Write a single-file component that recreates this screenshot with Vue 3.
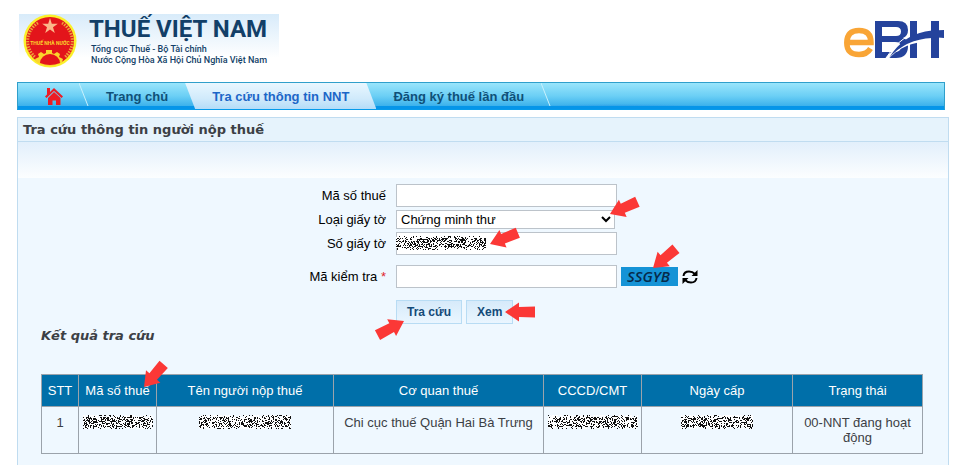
<template>
  <div class="page">
    <header class="header">
      <a class="brand" href="#">
        <svg class="emblem" viewBox="0 0 54 54" aria-hidden="true">
          <circle cx="27" cy="27" r="26.500" fill="#fbf02b" />
          <circle cx="27" cy="27" r="24" fill="#e3151b" />
          <path d="M15 9A21 21 0 0 0 12 43M39 9A21 21 0 0 1 42 43" fill="none" stroke="#f0a23a" stroke-width="3" stroke-dasharray="1.500 1.200" />
          <path d="M27 4l1.800 5.700h6l-4.800 3.600 1.800 5.700-4.800-3.500-4.800 3.500 1.800-5.700-4.800-3.600h6z" fill="#fbb78a" />
          <path d="M13 48l-1-3 4-2-1-3 3-2 3 2 2-1v-3h6v3l2 1 3-2 3 2-1 3 4 2-1 3q-12 8-26 0z" fill="#fbd52c" />
          <path d="M17 49a10 9 0 0 1 20 0q-10 4-20 0z" fill="#e3151b" />
          <path d="M8 25h38v8H8z" fill="#e3151b" />
          <text x="27" y="31" text-anchor="middle" class="emblem-text">THUẾ NHÀ NƯỚC</text>
        </svg>
        <span class="brand-text">
          <strong class="brand-name">THUẾ VIỆT NAM</strong>
          <span class="brand-line">Tổng cục Thuế - Bộ Tài chính</span>
          <span class="brand-line">Nước Cộng Hòa Xã Hội Chủ Nghĩa Việt Nam</span>
        </span>
      </a>
      <svg class="ebh" viewBox="0 0 100 40" role="img" aria-label="eBH">
        <path d="M3 22.500H27Q27 10.500 15 10.500T2.800 22.500 15 34.500Q23 34.500 26.500 28.500" fill="none" stroke="#f9a536" stroke-width="5.500" />
        <path d="M31 1h23q10 0 10 9 0 6-5 8 5 1 5 8 0 12-12 12H31zm7 6v9h14q5 0 5-4.500T52 7zm0 15v10h12q7 0 7-5t-6-5z" fill="#25439c" fill-rule="evenodd" />
        <path d="M66 1h7v37h-7zM87 1h8v37h-8z" fill="#25439c" />
        <path d="M42 40Q56 21 87 19.500" fill="none" stroke="#fff" stroke-width="3" />
        <path d="M45 38Q60 13 88 10.500q6-.5 12-.5v8q-6-1-12 0Q62 19 45 38z" fill="#25439c" />
        <path d="M42 38Q53 21 65 16" fill="none" stroke="#fff" stroke-width="1" />
      </svg>
    </header>

    <nav class="nav">
      <a class="nav-home" href="#" aria-label="Trang chủ">
        <svg viewBox="0 0 18 18" aria-hidden="true">
          <path d="M2 1h3v4l4-4 9 8.500-1.500 1.500L9 4 1.500 11 0 9.500l2-2z" fill="#ed1c24" />
          <path d="M9 5l6.500 6v7H11v-4.500H7.500V18H3v-7z" fill="#ed1c24" />
        </svg>
      </a>
      <svg class="nav-sep" viewBox="0 0 10 27" aria-hidden="true"><path d="M0 0l9 23" /></svg>
      <a class="nav-item" href="#">Trang chủ</a>
      <a class="nav-item active" href="#" aria-current="page">Tra cứu thông tin NNT</a>
      <a class="nav-item" href="#">Đăng ký thuế lần đầu</a>
      <svg class="nav-sep" viewBox="0 0 10 27" aria-hidden="true"><path d="M0 0l9 23" /></svg>
    </nav>

    <main class="panel">
      <h1 class="panel-title">Tra cứu thông tin người nộp thuế</h1>
      <div class="panel-band"></div>

      <form class="form" @submit.prevent>
        <label for="tax-code">Mã số thuế</label>
        <div class="field"><input id="tax-code" v-model="form.taxCode" type="text" /></div>

        <label for="doc-type">Loại giấy tờ</label>
        <div class="field">
          <select id="doc-type" v-model="form.docType">
            <option value="cmt">Chứng minh thư</option>
          </select>
          <svg class="arrow arrow-select" viewBox="0 0 30 20"><path :d="arrowPath" /></svg>
        </div>

        <label for="doc-number">Số giấy tờ</label>
        <div class="field">
          <input id="doc-number" v-model="form.docNumber" type="text" />
          <svg class="mask mask-field" width="90" height="14" viewBox="0 0 90 14">
            <path :d="fieldMask.light" fill="#fff" />
            <path :d="fieldMask.dark" fill="#111" />
          </svg>
          <svg class="arrow arrow-number" viewBox="0 0 30 20"><path :d="arrowPath" /></svg>
        </div>

        <label class="spaced" for="captcha">Mã kiểm tra <span class="required">*</span></label>
        <div class="field spaced">
          <input id="captcha" v-model="form.captcha" type="text" />
          <span class="captcha">
            SSGYB
            <svg class="arrow arrow-captcha" viewBox="0 0 30 20"><path :d="arrowPath" /></svg>
          </span>
          <button class="refresh" type="button" aria-label="Đổi mã">
            <svg viewBox="0 0 16 16" aria-hidden="true">
              <path d="M1.500 7Q2 2.500 7 2.500q3.500 0 6 2.500M14.500 9q-.5 4.500-5.500 4.500-3.500 0-6-2.500" fill="none" stroke="#000" stroke-width="2" />
              <path d="M15.500 1v6h-6zM.5 15V9h6z" />
            </svg>
          </button>
        </div>

        <div class="actions">
          <button class="btn" type="submit">Tra cứu</button>
          <button class="btn" type="button">Xem</button>
          <svg class="arrow arrow-search" viewBox="0 0 30 20"><path :d="arrowPath" /></svg>
          <svg class="arrow arrow-view" viewBox="0 0 30 20"><path :d="arrowPath" /></svg>
        </div>
      </form>

      <section class="results">
        <h2 class="results-title">Kết quả tra cứu</h2>
        <table class="table">
          <colgroup>
            <col v-for="col in columns" :key="col.label" :style="{ width: col.width + 'px' }" />
          </colgroup>
          <thead>
            <tr>
              <th v-for="(col, i) in columns" :key="col.label" scope="col">
                {{ col.label }}
                <svg v-if="i === 1" class="arrow arrow-table" viewBox="0 0 30 20"><path :d="arrowPath" /></svg>
              </th>
            </tr>
          </thead>
          <tbody>
            <tr>
              <td v-for="col in columns" :key="col.label">
                <svg v-if="col.mask" class="mask" :width="col.maskWidth" height="14">
                  <path :d="col.mask.light" fill="#fff" />
                  <path :d="col.mask.dark" fill="#111" />
                </svg>
                <template v-else>{{ col.value }}</template>
              </td>
            </tr>
          </tbody>
        </table>
      </section>
    </main>
  </div>
</template>

<script setup>
import { reactive } from 'vue'

const form = reactive({
  taxCode: '',
  docType: 'cmt',
  docNumber: '',
  captcha: '',
})

const arrowPath = 'M0 10L14 0.500v4.500l16 -.5v11l-16 -.5v4.500z'

// speckle that hides personal data
function speckle(seed, width, height) {
  let state = seed
  const random = () => {
    state = (state * 1103515245 + 12345) % 2147483648
    return state / 2147483648
  }
  let dark = ''
  let light = ''
  for (let y = 0; y < height; y++) {
    const edge = y < 2 || y > height - 3
    for (let x = 0; x < width; x++) {
      const r = random()
      const cell = `M${x} ${y}h1v1h-1z`
      if (r < (edge ? 0.18 : 0.42)) dark += cell
      else if (r < (edge ? 0.6 : 0.97)) light += cell
    }
  }
  return { dark, light }
}

const fieldMask = speckle(17, 90, 14)

const columns = [
  { label: 'STT', width: 37, value: '1' },
  { label: 'Mã số thuế', width: 78, mask: speckle(5, 70, 14), maskWidth: 70 },
  { label: 'Tên người nộp thuế', width: 177, mask: speckle(29, 92, 14), maskWidth: 92 },
  { label: 'Cơ quan thuế', width: 210, value: 'Chi cục thuế Quận Hai Bà Trưng' },
  { label: 'CCCD/CMT', width: 98, mask: speckle(41, 90, 14), maskWidth: 90 },
  { label: 'Ngày cấp', width: 151, mask: speckle(73, 72, 14), maskWidth: 72 },
  { label: 'Trạng thái', width: 130, value: '00-NNT đang hoạt động' },
]
</script>

<style>
body {
  margin: 0;
  background: #fff;
}
</style>

<style scoped>
.page {
  box-sizing: border-box;
  padding: 14px 24px 8px 17px;
  font-family: 'Liberation Sans', Arial, sans-serif;
  font-size: 13px;
  color: #000;
}

.header {
  display: flex;
  justify-content: space-between;
  align-items: flex-start;
  height: 68px;
  padding: 0 5px 0 2px;
}

.brand {
  display: flex;
  gap: 12px;
  width: 256px;
  height: 55px;
  padding-left: 4px;
  background: linear-gradient(#d8ebfa, #fff 80%);
  color: #123f68;
  text-decoration: none;
}

.emblem {
  width: 54px;
  height: 54px;
}

.emblem-text {
  font-family: Roboto, sans-serif;
  font-size: 5px;
  font-weight: 700;
  fill: #fbd52c;
}

.brand-text {
  display: flex;
  flex-direction: column;
  white-space: nowrap;
  font-family: Roboto, sans-serif;
}

.brand-name {
  font-size: 24px;
  line-height: 30px;
}

.brand-line {
  padding-left: 2px;
  font-size: 9px;
  font-weight: 500;
  line-height: 11px;
}

.ebh {
  width: 100px;
  height: 40px;
  margin-top: 6px;
}

.nav {
  display: flex;
  height: 26px;
  margin-right: 4px;
  border: 1px solid #2f9fcb;
  border-bottom-color: #069bea;
  background:
    linear-gradient(transparent 23px, #0695e8 23px),
    radial-gradient(ellipse at 73% 100%, rgba(30, 220, 240, 0.6), transparent 9%),
    radial-gradient(ellipse at 65% 100%, rgba(0, 110, 225, 0.5), transparent 14%),
    radial-gradient(ellipse at 47% 110%, rgba(0, 110, 235, 0.6), transparent 16%),
    linear-gradient(#9ae5fb, #6bcff5 50%, #2da8e8);
}

.nav-home {
  display: flex;
  align-items: center;
  justify-content: flex-end;
  width: 45px;
  padding-right: 16px;
}

.nav-home svg {
  width: 18px;
  height: 18px;
}

.nav-sep {
  width: 10px;
  height: 27px;
}

.nav-sep path {
  fill: none;
  stroke: #c8f0fc;
}

.nav-item {
  padding: 0 17px;
  color: #0f5078;
  font-weight: 700;
  line-height: 27px;
  text-decoration: none;
  white-space: nowrap;
}

.nav-item.active {
  padding: 0 27px;
  background: linear-gradient(#e9f7ff, #d0eafb 60%, #b4dcf8);
  clip-path: polygon(0 0, calc(100% - 10px) 0, 100% 100%, 10px 100%);
  color: #1c66c8;
}

.panel {
  margin-top: 7px;
  border: 1px solid #c0dcf0;
  border-bottom: 0;
  background: #eff8ff;
}

.panel-title {
  margin: 0;
  padding-left: 5px;
  border-bottom: 1px solid #c0dcf0;
  background: #e6f3fc;
  color: #3c4045;
  font-family: 'DejaVu Sans', Verdana, sans-serif;
  font-size: 13px;
  font-weight: 700;
  line-height: 23px;
}

.panel-band {
  height: 36px;
  background: linear-gradient(#e2effb, #fcfeff);
}

.form {
  display: grid;
  grid-template-columns: 2fr 3fr;
  align-items: center;
  row-gap: 3px;
  column-gap: 10px;
  padding-top: 6px;
}

.form label {
  text-align: right;
}

.field {
  position: relative;
  display: flex;
  align-items: center;
  gap: 4px;
}

.field input {
  box-sizing: border-box;
  width: 221px;
  height: 23px;
  padding: 1px 4px;
  border: 1px solid #bcc3ca;
  background: #fff;
  font: inherit;
}

.field select {
  width: 219px;
  height: 19px;
  border: 1px solid #bcc3ca;
  border-radius: 0;
  background: #fff;
  color: #000;
  font: inherit;
}

.form .spaced {
  margin-top: 7px;
}

.required {
  color: #e0252b;
}

.captcha {
  position: relative;
  width: 51px;
  padding-left: 6px;
  background: #1593d6;
  color: #062a4a;
  font-family: 'Open Sans', sans-serif;
  font-size: 15px;
  font-style: italic;
  font-weight: 600;
  line-height: 19px;
}

.refresh {
  width: 16px;
  height: 16px;
  padding: 0;
  border: 0;
  background: none;
}

.refresh svg {
  display: block;
}

.actions {
  position: relative;
  grid-column: 2;
  display: flex;
  gap: 4px;
  margin-top: 9px;
}

.btn {
  height: 24px;
  padding: 0 10px;
  border: 1px solid #b8dcf4;
  background: linear-gradient(#d6eafa, #eaf6ff);
  color: #134a78;
  font: inherit;
  font-size: 12px;
  font-weight: 700;
}

.mask {
  vertical-align: top;
  shape-rendering: crispEdges;
}

.mask-field {
  position: absolute;
  left: 0;
  top: 4px;
}

/* anchored on its tip, then turned */
.arrow {
  position: absolute;
  width: 30px;
  height: 20px;
  fill: #fb3836;
  transform-origin: 0 50%;
  overflow: visible;
}

.arrow-select {
  left: 214px;
  top: -6px;
  transform: rotate(-24deg);
}

.arrow-number {
  left: 94px;
  top: 2px;
  transform: rotate(-22deg);
}

.arrow-captcha {
  left: 32px;
  top: -9px;
  transform: rotate(-40deg);
}

.arrow-search {
  left: 8px;
  top: 11px;
  transform: rotate(152deg);
}

.arrow-view {
  left: 109px;
  top: 2px;
}

.arrow-table {
  z-index: 1;
  right: -18px;
  top: 2px;
  transform: rotate(-49deg);
}

.results {
  padding: 0 26px 11px 23px;
}

.results-title {
  margin: 0 0 27px;
  color: #3c4045;
  font-family: 'DejaVu Sans', Verdana, sans-serif;
  font-size: 13px;
  font-style: italic;
  font-weight: 700;
  line-height: 23px;
}

.table {
  width: 100%;
  border-collapse: collapse;
  table-layout: fixed;
  color: #3c4045;
  text-align: center;
}

.table th,
.table td {
  border: 1px solid #9ba3ab;
}

.table th {
  position: relative;
  height: 31px;
  padding: 0;
  background: #006fa9;
  color: #fff;
  font-weight: 400;
}

.table td {
  height: 30px;
  padding: 8px 4px;
  line-height: 15px;
  vertical-align: top;
}
</style>
